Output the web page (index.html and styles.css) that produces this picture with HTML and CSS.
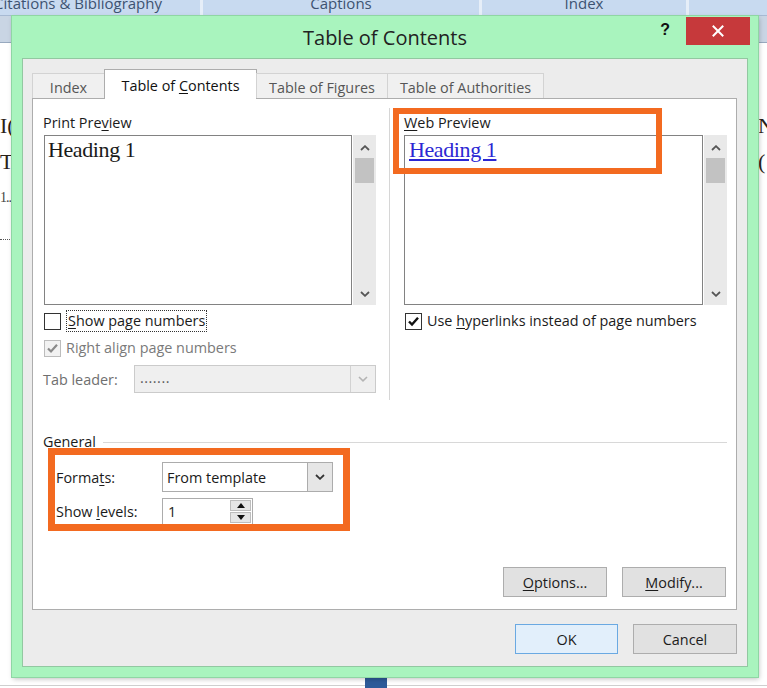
FILE: index.html
```html
<!DOCTYPE html>
<html lang="en">
<head>
<meta charset="utf-8">
<title>Table of Contents</title>
<link rel="stylesheet" href="styles.css">
</head>
<body>
<div class="screen">
  <div class="ribbon">
    <div class="rtab rtab-cite"><span>Citations &amp; Bibliography</span></div>
    <div class="rtab rtab-cap"><span>Captions</span></div>
    <div class="rtab rtab-idx"><span>Index</span></div>
    <div class="rtab rtab-rest"></div>
  </div>
  <div class="toolbar-strip"></div>
  <div class="desk">
    <div class="doc doc-left">
      <div class="doc-line doc-l1">I(</div>
      <div class="doc-line doc-l2">T(</div>
      <div class="doc-line doc-l3">1...</div>
      <div class="doc-dots"></div>
    </div>
    <div class="doc doc-right">
      <div class="doc-line doc-l1">N</div>
      <div class="doc-line doc-l2">(</div>
    </div>
  </div>
  <div class="bottom-strip"><span class="task-block"></span></div>

  <div class="dialog">
    <div class="titlebar">
      <div class="title">Table of Contents</div>
      <div class="controls">
        <span class="help">?</span>
        <span class="close"><svg width="12" height="12" viewBox="0 0 12 12"><path d="M1.5 1.5L10.5 10.5M10.5 1.5L1.5 10.5" stroke="#fff" stroke-width="2" stroke-linecap="square"/></svg></span>
      </div>
    </div>
    <div class="client">
      <div class="tabs">
        <div class="tab tab-index"><span>Index</span></div>
        <div class="tab tab-toc active"><span>Table of <u>C</u>ontents</span></div>
        <div class="tab tab-tof"><span>Table of Figures</span></div>
        <div class="tab tab-toa"><span>Table of Authorities</span></div>
      </div>
      <div class="panel">
        <div class="columns">
          <div class="col col-left">
            <div class="field-label">Print Pre<u>v</u>iew</div>
            <div class="preview-row">
              <div class="preview-box"><div class="preview-heading">Heading 1</div></div>
              <div class="scrollbar">
                <span class="sb-btn sb-up"><svg width="10" height="6" viewBox="0 0 10 6"><path d="M1 5L5 1.2L9 5" fill="none" stroke="#555" stroke-width="1.8"/></svg></span>
                <span class="sb-thumb"></span>
                <span class="sb-space"></span>
                <span class="sb-btn sb-down"><svg width="10" height="6" viewBox="0 0 10 6"><path d="M1 1L5 4.8L9 1" fill="none" stroke="#555" stroke-width="1.8"/></svg></span>
              </div>
            </div>
            <div class="check-row">
              <span class="checkbox"></span>
              <span class="check-label focus"><u>S</u>how page numbers</span>
            </div>
            <div class="check-row disabled">
              <span class="checkbox checkbox-dis"><svg width="15" height="15" viewBox="0 0 15 15"><path d="M3 7.5L6 10.5L12 3.8" fill="none" stroke="#8a8a8a" stroke-width="2.2"/></svg></span>
              <span class="check-label">Right align page numbers</span>
            </div>
            <div class="leader-row">
              <span class="leader-label">Tab leader:</span>
              <div class="select select-disabled">
                <span class="select-value">.......</span>
                <span class="select-arrow"><svg width="10" height="6" viewBox="0 0 10 6"><path d="M1 1L5 4.8L9 1" fill="none" stroke="#b4b4b4" stroke-width="1.6"/></svg></span>
              </div>
            </div>
          </div>
          <div class="col col-right">
            <div class="field-label"><u>W</u>eb Preview</div>
            <div class="preview-row">
              <div class="preview-box"><span class="preview-link">Heading 1</span></div>
              <div class="scrollbar">
                <span class="sb-btn sb-up"><svg width="10" height="6" viewBox="0 0 10 6"><path d="M1 5L5 1.2L9 5" fill="none" stroke="#555" stroke-width="1.8"/></svg></span>
                <span class="sb-thumb"></span>
                <span class="sb-space"></span>
                <span class="sb-btn sb-down"><svg width="10" height="6" viewBox="0 0 10 6"><path d="M1 1L5 4.8L9 1" fill="none" stroke="#555" stroke-width="1.8"/></svg></span>
              </div>
            </div>
            <div class="check-row">
              <span class="checkbox"><svg width="15" height="15" viewBox="0 0 15 15"><path d="M3 7.5L6 10.5L12 3.8" fill="none" stroke="#111" stroke-width="2.4"/></svg></span>
              <span class="check-label">Use <u>h</u>yperlinks instead of page numbers</span>
            </div>
            <div class="highlight highlight-web"></div>
          </div>
        </div>
        <div class="general">
          <div class="group-head"><span class="group-title">General</span><span class="group-line"></span></div>
          <div class="general-grid">
            <span class="glabel">Forma<u>t</u>s:</span>
            <div class="select select-formats">
              <span class="select-value">From template</span>
              <span class="select-arrow"><svg width="10" height="6" viewBox="0 0 10 6"><path d="M1 1L5 4.8L9 1" fill="none" stroke="#333" stroke-width="1.8"/></svg></span>
            </div>
            <span class="glabel">Show <u>l</u>evels:</span>
            <div class="spinner">
              <span class="spin-value">1</span>
              <span class="spin-btns">
                <span class="spin-btn"><svg width="8" height="5" viewBox="0 0 8 5"><path d="M0 5L4 0L8 5Z" fill="#111"/></svg></span>
                <span class="spin-btn"><svg width="8" height="5" viewBox="0 0 8 5"><path d="M0 0L4 5L8 0Z" fill="#111"/></svg></span>
              </span>
            </div>
          </div>
          <div class="highlight highlight-general"></div>
        </div>
        <div class="panel-buttons">
          <div class="btn"><span><u>O</u>ptions...</span></div>
          <div class="btn"><span><u>M</u>odify...</span></div>
        </div>
      </div>
      <div class="footer">
        <div class="btn btn-default">OK</div>
        <div class="btn">Cancel</div>
      </div>
    </div>
  </div>
</div>
</body>
</html>
```

FILE: styles.css
```css
* { box-sizing: border-box; }
html, body { margin: 0; padding: 0; }
body {
  width: 767px;
  height: 688px;
  overflow: hidden;
  background: #fff;
  font-family: "Open Sans", "Noto Sans", sans-serif;
  font-size: 14.4px;
  color: #1b1b1b;
}
u { text-decoration: underline; text-underline-offset: 2px; }

.screen {
  position: relative;
  width: 767px;
  height: 688px;
  overflow: hidden;
  display: flex;
  flex-direction: column;
}

/* background Word window */
.ribbon {
  display: flex;
  height: 16px;
  background: #c8daf0;
  border-bottom: 1px solid #a7bad3;
  overflow: hidden;
}
.rtab {
  height: 15px;
  display: flex;
  justify-content: center;
  overflow: hidden;
  white-space: nowrap;
  color: #3d5372;
  font-size: 15px;
  line-height: 15px;
  border-right: 3px solid #e6eef8;
}
.rtab span { margin-top: -4px; }
.rtab-cite { width: 203px; justify-content: flex-end; padding-right: 38px; }
.rtab-cap { width: 279px; }
.rtab-idx { width: 207px; }
.rtab-rest { flex: 1; border-right: none; }

.toolbar-strip {
  height: 27px;
  background: #c9d5e4;
  border-bottom: 1px solid #98a9bf;
}
.desk {
  flex: 1;
  display: flex;
  justify-content: space-between;
}
.doc { font-family: "Liberation Serif", serif; font-size: 22px; color: #2a2218; }
.doc-left { width: 14px; overflow: hidden; white-space: nowrap; }
.doc-right { width: 9px; overflow: hidden; white-space: nowrap; }
.doc-line { line-height: 22px; }
.doc-l1 { margin-top: 72px; }
.doc-l2 { margin-top: 14px; }
.doc-l3 { margin-top: 14px; font-size: 14px; letter-spacing: -1px; color: #444; }
.doc-dots { margin-top: 30px; border-top: 1px dotted #555; width: 12px; }
.bottom-strip {
  height: 11px;
  display: flex;
  padding-left: 365px;
  background: linear-gradient(to bottom, #fff 0 8px, #cfcfcf 8px 9px, #fff 9px);
}
.task-block { width: 22px; height: 10px; margin-top: 1px; background: #2d5a99; }

/* dialog window */
.dialog {
  position: absolute;
  left: 12px;
  top: 16px;
  width: 746px;
  height: 661px;
  background: #a9f4be;
  box-shadow: 0 0 0 1px #8fd6a4, 1px 2px 5px rgba(0, 0, 0, 0.25);
  display: flex;
  flex-direction: column;
}
.titlebar {
  height: 42px;
  display: grid;
  grid-template-columns: 1fr auto 1fr;
  align-items: start;
}
.title {
  grid-column: 2;
  font-size: 20px;
  line-height: 28px;
  margin-top: 8px;
  color: #222;
}
.controls {
  grid-column: 3;
  justify-self: end;
  display: flex;
  align-items: flex-start;
  margin-top: 1px;
  margin-right: 8px;
}
.help {
  font-family: "Liberation Sans", sans-serif;
  font-weight: 700;
  font-size: 16px;
  line-height: 20px;
  margin-top: 3px;
  margin-right: 16px;
  color: #111;
}
.close {
  width: 64px;
  height: 28px;
  background: #c6393b;
  display: flex;
  align-items: center;
  justify-content: center;
}

.client {
  flex: 1;
  margin: 0 10px 10px;
  background: #ececec;
  border: 1px solid #92c8a1;
  padding: 10px 10px 12px 9px;
  display: flex;
  flex-direction: column;
}

/* tabs */
.tabs {
  display: flex;
  align-items: flex-end;
  height: 29px;
  position: relative;
  z-index: 1;
}
.tab {
  height: 25px;
  padding-top: 2px;
  border: 1px solid #d3d3d3;
  border-bottom: none;
  background: #f0f0f0;
  color: #565656;
  display: flex;
  align-items: center;
  justify-content: center;
  white-space: nowrap;
  margin-right: -1px;
}
.tab.active {
  height: 30px;
  margin-bottom: -1px;
  background: #fff;
  color: #111;
  border-color: #adadad;
}
.tab-index { width: 73px; }
.tab-toc { width: 153px; }
.tab-tof { width: 132px; }
.tab-toa { width: 157px; }

.panel {
  height: 512px;
  background: #fff;
  border: 1px solid #adadad;
  padding: 0 9px 12px 10px;
  display: flex;
  flex-direction: column;
}

.columns {
  margin-top: 9px;
  height: 292px;
  display: grid;
  grid-template-columns: 333px 1fr;
}
.col-right {
  position: relative;
  margin-left: 13px;
  padding-left: 14px;
  border-left: 1px solid #d6d6d6;
}
.field-label {
  line-height: 18px;
  margin-top: 6px;
  margin-bottom: 3px;
}
.preview-row {
  display: flex;
  height: 170px;
  gap: 1px;
}
.col-left .preview-row { margin-left: 1px; }
.preview-box {
  flex: 1;
  border: 1px solid #828282;
  background: #fff;
  padding: 2px 3px;
}
.preview-heading,
.preview-link {
  font-family: "Liberation Serif", serif;
  font-size: 22px;
  line-height: 24px;
  letter-spacing: -0.4px;
  color: #1a1a1a;
}
.preview-link {
  color: #2b27d3;
  text-decoration: underline;
  text-underline-offset: 2px;
  margin-left: 1px;
}
.scrollbar {
  width: 23px;
  background: #e9e9e9;
  display: flex;
  flex-direction: column;
}
.sb-btn {
  height: 23px;
  display: flex;
  align-items: center;
  justify-content: center;
}
.sb-up { padding-top: 3px; }
.sb-down { height: 22px; }
.sb-thumb { height: 25px; margin: 0 2px; background: #c2c2c2; }
.sb-space { flex: 1; }

.check-row {
  display: flex;
  align-items: center;
  height: 22px;
  margin-top: 5px;
}
.checkbox {
  width: 17px;
  height: 17px;
  margin-left: 1px;
  border: 1px solid #333;
  background: #fff;
  display: flex;
  align-items: center;
  justify-content: center;
}
.checkbox-dis { border-color: #bcbcbc; background: #f2f2f2; }
.check-label { margin-left: 5px; line-height: 20px; }
.check-label.focus { border: 1px dotted #333; padding: 0 1px; }
.disabled .check-label { color: #7a7a7a; }

.leader-row {
  display: flex;
  align-items: center;
  margin-top: 6px;
  height: 28px;
}
.leader-label { width: 91px; color: #6f6f6f; }
.select {
  display: flex;
  align-items: stretch;
  border: 1px solid #acacac;
  background: #fff;
}
.select-disabled {
  flex: 1;
  height: 28px;
  background: #efefef;
  border-color: #cbcbcb;
}
.select-value {
  flex: 1;
  display: flex;
  align-items: center;
  padding-left: 4px;
}
.select-disabled .select-value { color: #5a5a5a; letter-spacing: 0.5px; padding-left: 5px; padding-bottom: 4px; }
.select-arrow {
  width: 25px;
  display: flex;
  align-items: center;
  justify-content: center;
  border-left: 1px solid #d2d2d2;
}
.select-formats { width: 171px; height: 30px; }
.select-formats .select-arrow { background: #e6e6e6; border-left-color: #acacac; }

.highlight {
  position: absolute;
  border-style: solid;
  border-color: #f36a20;
  pointer-events: none;
}
.highlight-web { left: 3px; top: 0; width: 269px; height: 66px; border-width: 6px; }

.general { position: relative; margin-top: 33px; }
.group-head { display: flex; align-items: center; line-height: 18px; }
.group-line { flex: 1; height: 1px; background: #d8d8d8; margin-left: 7px; }
.general-grid {
  margin-top: 11px;
  padding-left: 13px;
  display: grid;
  grid-template-columns: 106px auto;
  row-gap: 6px;
  justify-items: start;
  align-items: center;
}
.spinner {
  width: 91px;
  height: 27px;
  display: flex;
  border: 1px solid #acacac;
  background: #fff;
}
.spin-value { flex: 1; padding-left: 5px; display: flex; align-items: center; }
.spin-btns { width: 23px; display: flex; flex-direction: column; padding: 1px; gap: 1px; }
.spin-btn {
  flex: 1;
  background: #e6e6e6;
  border: 1px solid #bdbdbd;
  display: flex;
  align-items: center;
  justify-content: center;
}
.highlight-general { left: 5px; top: 15px; width: 302px; height: 83px; border-width: 7px; }

.panel-buttons {
  margin-top: auto;
  margin-right: 1px;
  display: flex;
  justify-content: flex-end;
  gap: 15px;
}
.btn {
  width: 104px;
  height: 30px;
  border: 1px solid #adadad;
  background: #e1e1e1;
  display: flex;
  align-items: center;
  justify-content: center;
  color: #1b1b1b;
}
.footer {
  margin-top: 14px;
  display: flex;
  justify-content: flex-end;
  gap: 15px;
}
.btn-default {
  width: 103px;
  background: #e2effb;
  border-color: #6aa9e2;
}
```
